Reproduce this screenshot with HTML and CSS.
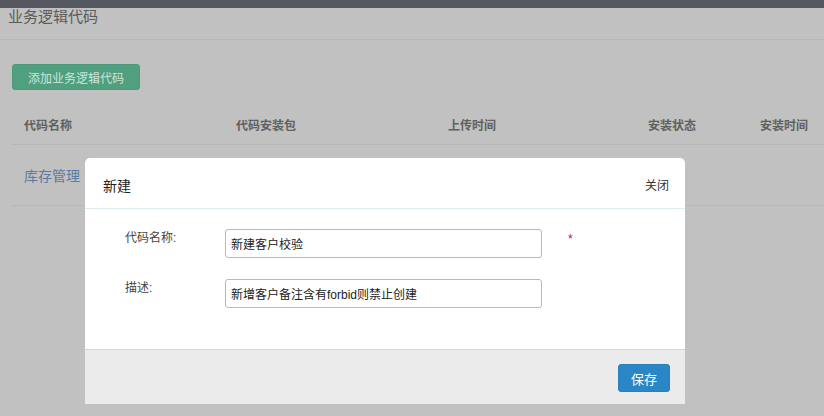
FILE: index.html
```html
<!DOCTYPE html>
<html lang="zh">
<head>
<meta charset="utf-8">
<title>业务逻辑代码</title>
<link rel="stylesheet" href="styles.css">
</head>
<body>
<div class="topbar"></div>
<div class="page-head"><h1 class="page-title">业务逻辑代码</h1></div>
<div class="toolbar"><button class="btn-add">添加业务逻辑代码</button></div>
<div class="table">
  <div class="thead">
    <div class="cell">代码名称</div>
    <div class="cell">代码安装包</div>
    <div class="cell">上传时间</div>
    <div class="cell">安装状态</div>
    <div class="cell">安装时间</div>
  </div>
  <div class="trow">
    <div class="cell link">库存管理</div>
    <div class="cell"></div>
    <div class="cell"></div>
    <div class="cell"></div>
    <div class="cell"></div>
  </div>
</div>

<div class="modal">
  <div class="modal-head">
    <span class="modal-title">新建</span>
    <span class="modal-close">关闭</span>
  </div>
  <div class="modal-body">
    <div class="form-row">
      <label class="form-label">代码名称:</label>
      <input class="form-input" type="text" value="新建客户校验">
      <span class="required">*</span>
    </div>
    <div class="form-row">
      <label class="form-label">描述:</label>
      <input class="form-input" type="text" value="新增客户备注含有forbid则禁止创建">
      <span class="required"></span>
    </div>
  </div>
  <div class="modal-foot">
    <button class="btn-save">保存</button>
  </div>
</div>
</body>
</html>
```
FILE: styles.css
```css
* { box-sizing: border-box; }
html, body { margin: 0; padding: 0; }
body {
  background: #c1c1c1;
  font-family: "Liberation Sans", "Noto Sans CJK SC", sans-serif;
  color: #333;
  width: 824px;
  height: 416px;
  overflow: hidden;
  position: relative;
}
.topbar { height: 8px; background: #54575f; }
.page-head {
  height: 32px;
  border-bottom: 1px solid #b4b7bb;
  padding-left: 8px;
}
.page-title {
  margin: 0;
  font-size: 15px;
  font-weight: normal;
  line-height: 18px;
  color: #5a5a5a;
}
.toolbar { padding: 24px 0 0 12px; }
.btn-add {
  display: block;
  width: 128px;
  height: 26px;
  border: 1px solid #4a9a79;
  border-radius: 3px;
  background: #50a07f;
  color: #cfe4d9;
  font-family: inherit;
  font-size: 12px;
  padding: 0;
}
.table { margin: 14px 0 0 12px; }
.thead, .trow {
  display: grid;
  grid-template-columns: 212px 212px 200px 112px 1fr;
  border-bottom: 1px solid #b4b7bb;
}
.thead { height: 41px; align-items: center; }
.trow { height: 61px; align-items: center; }
.cell { padding-left: 12px; font-size: 12px; }
.thead .cell { color: #606060; font-weight: bold; }
.cell.link { color: #5a7ba1; font-size: 14px; }

.modal {
  position: absolute;
  left: 85px;
  top: 158px;
  width: 600px;
  background: #fff;
  border-radius: 5px 5px 0 0;
}
.modal-head {
  height: 51px;
  border-bottom: 1px solid #e0ebef;
  display: flex;
  align-items: center;
  justify-content: space-between;
  padding: 3px 16px 0 18px;
}
.modal-title { font-size: 14px; color: #222; }
.modal-close { font-size: 12px; color: #333; }
.modal-body {
  padding: 20px 0 41px 40px;
  display: flex;
  flex-direction: column;
  gap: 21px;
}
.form-row {
  display: grid;
  grid-template-columns: 100px 317px 26px 10px;
  align-items: start;
}
.form-label {
  font-size: 12px;
  line-height: 18px;
  color: #444;
}
.form-input {
  height: 29px;
  border: 1px solid #b9b9b9;
  border-radius: 3px;
  padding: 0 5px;
  font-family: inherit;
  font-size: 12px;
  color: #222;
  background: #fff;
  outline: none;
}
.required {
  grid-column: 4;
  color: #b3172a;
  font-size: 12px;
  line-height: 14px;
  padding-top: 3px;
}
.modal-foot {
  height: 55px;
  border-top: 1px solid #d6d6d6;
  background: #ebebeb;
  display: flex;
  justify-content: flex-end;
  align-items: flex-start;
  padding: 14px 15px 0 0;
}
.btn-save {
  width: 52px;
  height: 28px;
  border: 1px solid #2680bd;
  border-radius: 3px;
  background: #2a86c4;
  color: #fff;
  font-family: inherit;
  font-size: 13px;
  padding: 0;
}
```
